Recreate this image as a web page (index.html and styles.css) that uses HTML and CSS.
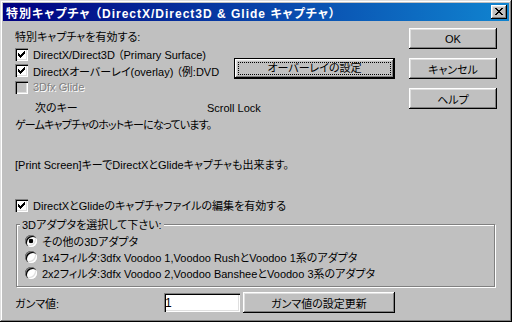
FILE: index.html
```html
<html>

<head>
    <meta charset="utf-8">
    <title>特別キャプチャ</title>
    <link rel="stylesheet" href="styles.css">
</head>

<body>
    <div class="window">
        <div class="titlebar">
            <span class="title">特別キャプチャ （DirectX/Direct3D &amp; Glide キャプチャ）</span>
            <button class="close">
                <svg width="8" height="7" viewBox="0 0 8 7" shape-rendering="crispEdges">
                    <path d="M0 0h2v1h-2zM6 0h2v1h-2zM1 1h2v1h-2zM5 1h2v1h-2zM2 2h4v1h-4zM3 3h2v1h-2zM2 4h4v1h-4zM1 5h2v1h-2zM5 5h2v1h-2zM0 6h2v1h-2zM6 6h2v1h-2z" fill="#000" />
                </svg>
            </button>
        </div>

        <div class="content">
            <div class="top">
                <div class="left">
                    <div class="line">特別キャプチャを有効する:</div>
                    <div class="check">
                        <span class="box"><svg width="13" height="13" viewBox="0 0 13 13" shape-rendering="crispEdges"><path d="M9 3h1v1h-1zM8 4h2v1h-2zM3 5h1v1h-1zM7 5h3v1h-3zM3 6h2v1h-2zM6 6h3v1h-3zM3 7h5v1h-5zM4 8h3v1h-3zM5 9h1v1h-1z" fill="#000" /></svg></span>
                        DirectX/Direct3D （Primary Surface)
                    </div>
                    <div class="check tall">
                        <span class="box"><svg width="13" height="13" viewBox="0 0 13 13" shape-rendering="crispEdges"><path d="M9 3h1v1h-1zM8 4h2v1h-2zM3 5h1v1h-1zM7 5h3v1h-3zM3 6h2v1h-2zM6 6h3v1h-3zM3 7h5v1h-5zM4 8h3v1h-3zM5 9h1v1h-1z" fill="#000" /></svg></span>
                        DirectXオーバーレイ(overlay) （例:DVD
                        <button class="btn default overlayBtn"><span class="focus">オーバーレイの設定</span></button>
                    </div>
                    <div class="check disabled">
                        <span class="box"></span>
                        3Dfx Glide
                    </div>
                    <div class="hotkey">
                        <span class="keyName">次のキー</span>
                        <span>Scroll Lock</span>
                    </div>
                    <div class="line note">ゲームキャプチャのホットキーになっています。</div>
                </div>

                <div class="side">
                    <button class="btn sideBtn">OK</button>
                    <button class="btn sideBtn">キャンセル</button>
                    <button class="btn sideBtn">ヘルプ</button>
                </div>
            </div>

            <div class="line printScreen">[Print Screen]キーでDirectXとGlideキャプチャも出来ます。</div>

            <div class="check editRow">
                <span class="box"><svg width="13" height="13" viewBox="0 0 13 13" shape-rendering="crispEdges"><path d="M9 3h1v1h-1zM8 4h2v1h-2zM3 5h1v1h-1zM7 5h3v1h-3zM3 6h2v1h-2zM6 6h3v1h-3zM3 7h5v1h-5zM4 8h3v1h-3zM5 9h1v1h-1z" fill="#000" /></svg></span>
                DirectXとGlideのキャプチャファイルの編集を有効する
            </div>

            <div class="group">
                <div class="legend">3Dアダプタを選択して下さい:</div>
                <div class="option"><span class="radio on"></span>その他の3Dアダプタ</div>
                <div class="option"><span class="radio"></span>1x4フィルタ:3dfx Voodoo 1,Voodoo RushとVoodoo 1系のアダプタ</div>
                <div class="option"><span class="radio"></span>2x2フィルタ:3dfx Voodoo 2,Voodoo BansheeとVoodoo 3系のアダプタ</div>
            </div>

            <div class="gamma">
                <span class="gammaLabel">ガンマ値:</span>
                <input class="field" type="text" value="1">
                <button class="btn gammaBtn">ガンマ値の設定更新</button>
            </div>
        </div>
    </div>
</body>

</html>
```

FILE: styles.css
```css
body {
    margin: 0;
    background: #c0c0c0;
    font-family: "Liberation Sans", "Noto Sans CJK JP", sans-serif;
    font-size: 11px;
    font-feature-settings: "palt";
    color: #000;
}

.window {
    width: 512px;
    height: 322px;
    box-sizing: border-box;
    padding: 3px;
    background: #c0c0c0;
    box-shadow: inset -1px -1px #000, inset 1px 1px #dfdfdf, inset -2px -2px #808080, inset 2px 2px #fff;
}

.titlebar {
    height: 18px;
    display: flex;
    align-items: center;
    justify-content: space-between;
    padding: 0 2px 0 3px;
    background: linear-gradient(to right, #000080, #1084d0);
}

.title {
    color: #fff;
    font-size: 12px;
    font-weight: bold;
    letter-spacing: 1px;
    white-space: nowrap;
}

button {
    font-family: inherit;
    font-size: 11px;
    font-feature-settings: "palt";
    color: #000;
    padding: 0;
    border: none;
    background: #c0c0c0;
    box-shadow: inset -1px -1px #000, inset 1px 1px #fff, inset -2px -2px #808080, inset 2px 2px #dfdfdf;
}

.close {
    width: 16px;
    height: 14px;
    display: flex;
    align-items: center;
    justify-content: center;
}

.close svg {
    display: block;
    margin: 0 1px 1px 0;
}

.content {
    padding: 7px 0 0 12px;
}

.top {
    display: flex;
}

.left {
    width: 380px;
    padding-top: 1px;
}

.side {
    margin-left: 14px;
    display: flex;
    flex-direction: column;
    gap: 9px;
}

.line {
    height: 17px;
    line-height: 17px;
    white-space: nowrap;
}

.check {
    height: 16px;
    display: flex;
    align-items: center;
    white-space: nowrap;
}

.check.tall {
    height: 17px;
}

.box {
    flex: none;
    width: 13px;
    height: 13px;
    margin-right: 5px;
    background: #fff;
    box-shadow: inset 1px 1px #808080, inset 2px 2px #000, inset -1px -1px #fff, inset -2px -2px #dfdfdf;
}

.box svg {
    display: block;
}

.disabled {
    color: #808080;
    text-shadow: 1px 1px #fff;
}

.disabled .box {
    background: #c0c0c0;
}

.btn {
    height: 21px;
    text-align: center;
}

.sideBtn {
    width: 88px;
}

.overlayBtn {
    margin-left: auto;
    align-self: flex-start;
    margin-top: -4px;
    width: 161px;
    box-sizing: border-box;
    padding: 3px;
}

.default {
    border: 1px solid #000;
}

.focus {
    display: block;
    height: 100%;
    box-sizing: border-box;
    border: 1px dotted #000;
    line-height: 11px;
}

.hotkey {
    margin-top: 5px;
    height: 16px;
    line-height: 16px;
    padding-left: 20px;
    display: flex;
}

.keyName {
    width: 172px;
}

.note {
    margin-top: 1px;
    letter-spacing: -0.8px;
}

.printScreen {
    margin-top: 23px;
}

.editRow {
    margin-top: 23px;
}

.group {
    margin: 11px 0 0 1px;
    width: 479px;
    height: 63px;
    box-sizing: border-box;
    border: 1px solid #808080;
    box-shadow: inset 1px 1px #fff, 1px 1px #fff;
}

.legend {
    display: table;
    margin: -8px 0 0 3px;
    padding: 0 2px;
    height: 16px;
    line-height: 16px;
    background: #c0c0c0;
}

.option {
    height: 16px;
    display: flex;
    align-items: center;
    padding-left: 8px;
    white-space: nowrap;
}

.radio {
    flex: none;
    width: 12px;
    height: 12px;
    margin-right: 5px;
    border-radius: 50%;
    background: #fff;
    box-shadow: inset 1px 1px #808080, inset 2px 2px #000, inset -1px -1px #fff, inset -2px -2px #dfdfdf;
}

.radio.on {
    background: radial-gradient(circle, #000 2px, #fff 2.6px);
}

.gamma {
    margin-top: 5px;
    height: 21px;
    display: flex;
    align-items: center;
}

.gammaLabel {
    width: 149px;
}

.field {
    width: 76px;
    height: 19px;
    box-sizing: border-box;
    border: none;
    padding: 0 1px;
    font-family: inherit;
    font-size: 12px;
    background: #fff;
    box-shadow: inset 1px 1px #808080, inset 2px 2px #000, inset -1px -1px #fff, inset -2px -2px #dfdfdf;
    outline: none;
}

.gammaBtn {
    margin-left: 3px;
    width: 152px;
}
```
